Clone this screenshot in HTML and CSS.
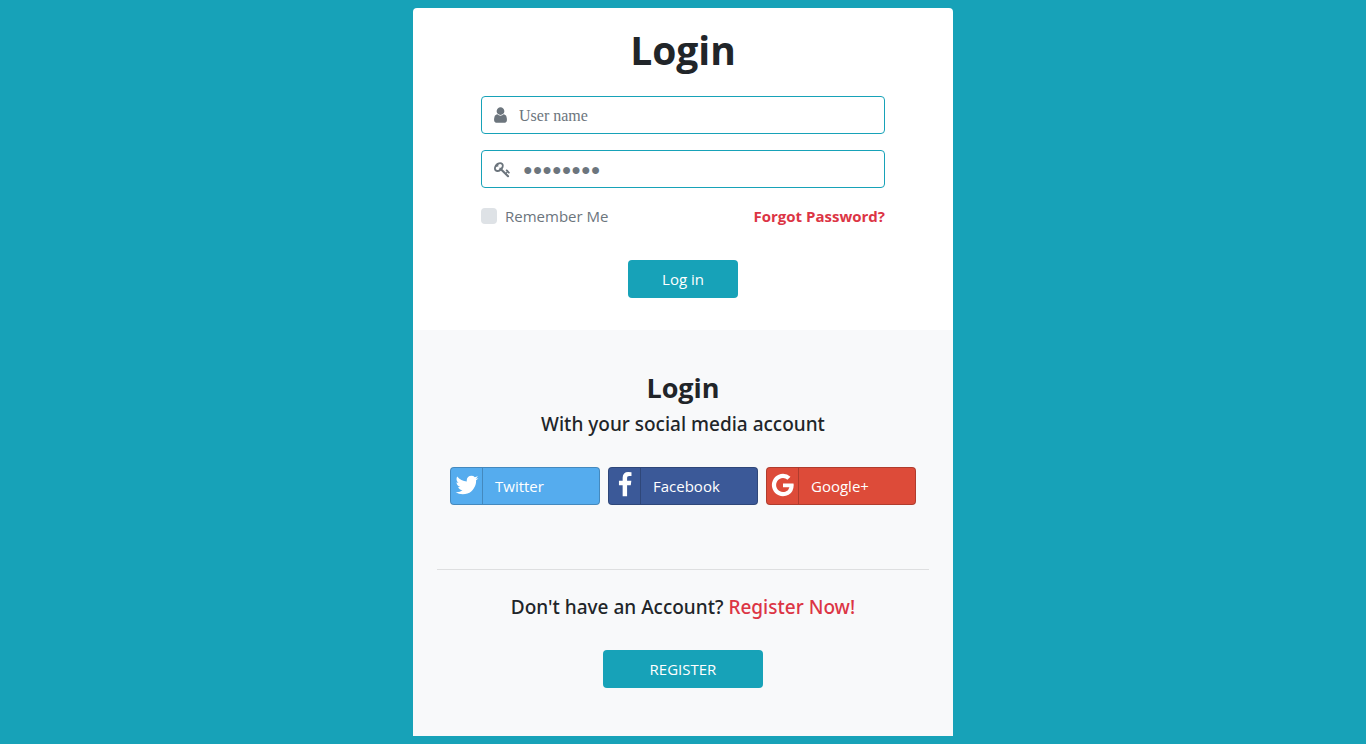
FILE: index.html
```html
<!DOCTYPE html>
<html lang="en">

<head>
    <meta charset="utf-8">
    <meta name="viewport" content="width=device-width, initial-scale=1">
    <title>Login</title>
    <link rel="stylesheet" href="styles.css">
</head>

<body>
    <main class="card">
        <section class="login">
            <h1>Login</h1>
            <form method="post" action="#">
                <div class="field">
                    <label for="username" aria-label="User name">
                        <svg class="icon-user" viewBox="0 0 1280 1792"><path d="M1280 1399q0 109-62.5 187T1067 1664H213q-88 0-150.5-78T0 1399q0-85 8.5-160.5t31.5-152 58.5-131 94-89T327 832q131 128 313 128t313-128q76 0 134.5 34.5t94 89 58.5 131 31.5 152 8.5 160.5zm-256-887q0 159-112.5 271.5T640 896 368.5 783.5 256 512t112.5-271.5T640 128t271.5 112.5T1024 512z"/></svg>
                    </label>
                    <input type="text" id="username" name="username" class="username" placeholder="User name">
                </div>
                <div class="field">
                    <label for="password" aria-label="Password">
                        <svg class="icon-key" viewBox="0 0 1792 1792"><path d="M832 512q0-80-56-136t-136-56-136 56-56 136q0 42 19 83-41-19-83-19-80 0-136 56t-56 136 56 136 136 56 136-56 56-136q0-42-19-83 41 19 83 19 80 0 136-56t56-136zm851 704q0 17-49 66t-66 49q-9 0-28.5-16t-36.5-33-38.5-40-24.5-26l-96 96 220 220q28 28 28 68 0 42-39 81t-81 39q-40 0-68-28L733 1021q-176 131-365 131-163 0-265.5-102.5T0 784q0-160 95-313t248-248 313-95q163 0 265.5 102.5T1024 496q0 189-131 365l355 355 96-96q-3-3-26-24.5t-40-38.5-33-36.5-16-28.5q0-17 49-66t66-49q13 0 23 10 6 6 46 44.5t82 79.5 86.5 86 73 78 28.5 41z"/></svg>
                    </label>
                    <input type="password" id="password" name="password" class="password" placeholder="●●●●●●●●">
                </div>
                <div class="options">
                    <div class="remember">
                        <input type="checkbox" id="remember" name="remember">
                        <label for="remember">Remember Me</label>
                    </div>
                    <a href="#" class="forgot">Forgot Password?</a>
                </div>
                <button type="submit" class="btn btn-login">Log in</button>
            </form>
        </section>

        <section class="social">
            <h2>Login</h2>
            <p class="lead">With your social media account</p>
            <div class="social-buttons">
                <button type="button" class="btn-social twitter">
                    <span class="logo"><svg viewBox="0 0 1792 1792"><path d="M1684 408q-67 98-162 167 1 14 1 42 0 130-38 259.5T1369.5 1125 1185 1335.5t-258 146-323 54.5q-271 0-496-145 35 4 78 4 225 0 401-138-105-2-188-64.5T285 1033q33 5 61 5 43 0 85-11-112-23-185.5-111.5T172 710v-4q68 38 146 41-66-44-105-115t-39-154q0-88 44-163 121 149 294.5 238.5T884 653q-8-38-8-74 0-134 94.5-228.5T1199 256q140 0 236 102 109-21 205-78-37 115-142 178 93-10 186-50z"/></svg></span>
                    Twitter
                </button>
                <button type="button" class="btn-social facebook">
                    <span class="logo"><svg viewBox="0 0 1792 1792"><path d="M1343 12v264h-157q-86 0-116 36t-30 108v189h293l-39 296h-254v759H734V905H479V609h255V391q0-186 104-288.5T1115 0q147 0 228 12z"/></svg></span>
                    Facebook
                </button>
                <button type="button" class="btn-social google">
                    <span class="logo"><svg viewBox="0 0 1792 1792"><path d="M896 786h725q12 67 12 128 0 217-91 387.5t-259.5 266.5-386.5 96q-157 0-299-60.5t-245-163.5-163.5-245-60.5-299 60.5-299 163.5-245 245-163.5 299-60.5q300 0 515 201l-209 201q-123-119-306-119-129 0-238.5 65t-173.5 176.5-64 243.5 64 243.5 173.5 176.5 238.5 65q87 0 160-24t120-60 82-82 51.5-87 22.5-78h-436v-264z"/></svg></span>
                    Google+
                </button>
            </div>
            <hr>
            <p class="lead">Don't have an Account? <a href="#">Register Now!</a></p>
            <button type="button" class="btn btn-register">REGISTER</button>
        </section>
    </main>
</body>

</html>
```
FILE: styles.css
```css
* {
    box-sizing: border-box;
}

body {
    margin: 0;
    padding: 8px;
    background: #17a2b8;
    color: #212529;
    font: 15px/24px "Segoe UI", "Open Sans", "Noto Sans", sans-serif;
}

h1, h2, p {
    margin: 0;
    text-align: center;
}

h1 {
    font-size: 39px;
    line-height: 48px;
    margin-bottom: 22px;
}

h2 {
    font-size: 27px;
    line-height: 36px;
    margin-bottom: 6px;
}

a {
    color: #dc3545;
    text-decoration: none;
}

button {
    font: inherit;
    color: #fff;
    cursor: pointer;
}

svg {
    display: block;
    fill: currentColor;
}

.card {
    max-width: 540px;
    margin: 0 auto;
    border-radius: 4px 4px 0 0;
    background: #fff;
    overflow: hidden;
}

.login {
    padding: 18px 68px 32px;
}

.field {
    display: flex;
    align-items: center;
    height: 38px;
    margin-bottom: 16px;
    padding: 0 12px;
    border: 1px solid #17a2b8;
    border-radius: 4px;
    color: #6c757d;
}

.field label {
    width: 25px;
}

.icon-user {
    width: 13px;
    height: 18px;
}

.icon-key {
    width: 17px;
    height: 17px;
}

.field input {
    flex: 1;
    min-width: 0;
    padding: 2px 0 0;
    border: 0;
    outline: 0;
    background: none;
    color: #495057;
    font-size: 16px;
}

.field input::placeholder {
    color: #6c757d;
    opacity: 1;
}

.field .username {
    font-family: "Liberation Serif", serif;
}

.field .password {
    padding-left: 4px;
    font-family: "Liberation Sans", sans-serif;
}

.options {
    display: flex;
    flex-wrap: wrap;
    justify-content: space-between;
    margin-bottom: 32px;
}

.remember {
    display: flex;
    align-items: center;
    gap: 8px;
    color: #6c757d;
}

.remember input {
    appearance: none;
    width: 16px;
    height: 16px;
    margin: 0;
    border-radius: 4px;
    background: #dee2e6;
}

.remember input:checked {
    background: #17a2b8;
}

.forgot {
    font-weight: bold;
}

.btn {
    display: block;
    height: 38px;
    margin: 0 auto;
    padding: 0;
    border: 0;
    border-radius: 4px;
    background: #17a2b8;
}

.btn-login {
    width: 110px;
}

.btn-register {
    width: 160px;
}

.social {
    padding: 40px 24px 48px;
    background: #f8f9fa;
}

.lead {
    font-family: "Segoe UI", "Noto Sans", sans-serif;
    font-size: 19px;
    font-weight: 500;
}

/* social buttons */
.social-buttons {
    display: flex;
    flex-wrap: wrap;
    justify-content: center;
    gap: 8px;
    margin: 31px 0 64px;
}

.btn-social {
    display: flex;
    align-items: center;
    width: 150px;
    height: 38px;
    padding: 0;
    border: 1px solid rgba(0, 0, 0, 0.2);
    border-radius: 4px;
}

.logo {
    display: flex;
    justify-content: center;
    width: 32px;
    height: 36px;
    padding-top: 4px;
    margin-right: 12px;
    border-right: 1px solid rgba(0, 0, 0, 0.2);
}

.logo svg {
    width: 26px;
    height: 26px;
}

.twitter {
    background: #55acee;
}

.facebook {
    background: #3b5998;
}

.google {
    background: #dd4b39;
}

hr {
    margin: 0 0 25px;
    border: 0;
    border-top: 1px solid rgba(0, 0, 0, 0.1);
}

hr + .lead {
    margin-bottom: 31px;
}

@media (max-width: 480px) {
    .login {
        padding-left: 24px;
        padding-right: 24px;
    }
}
```
